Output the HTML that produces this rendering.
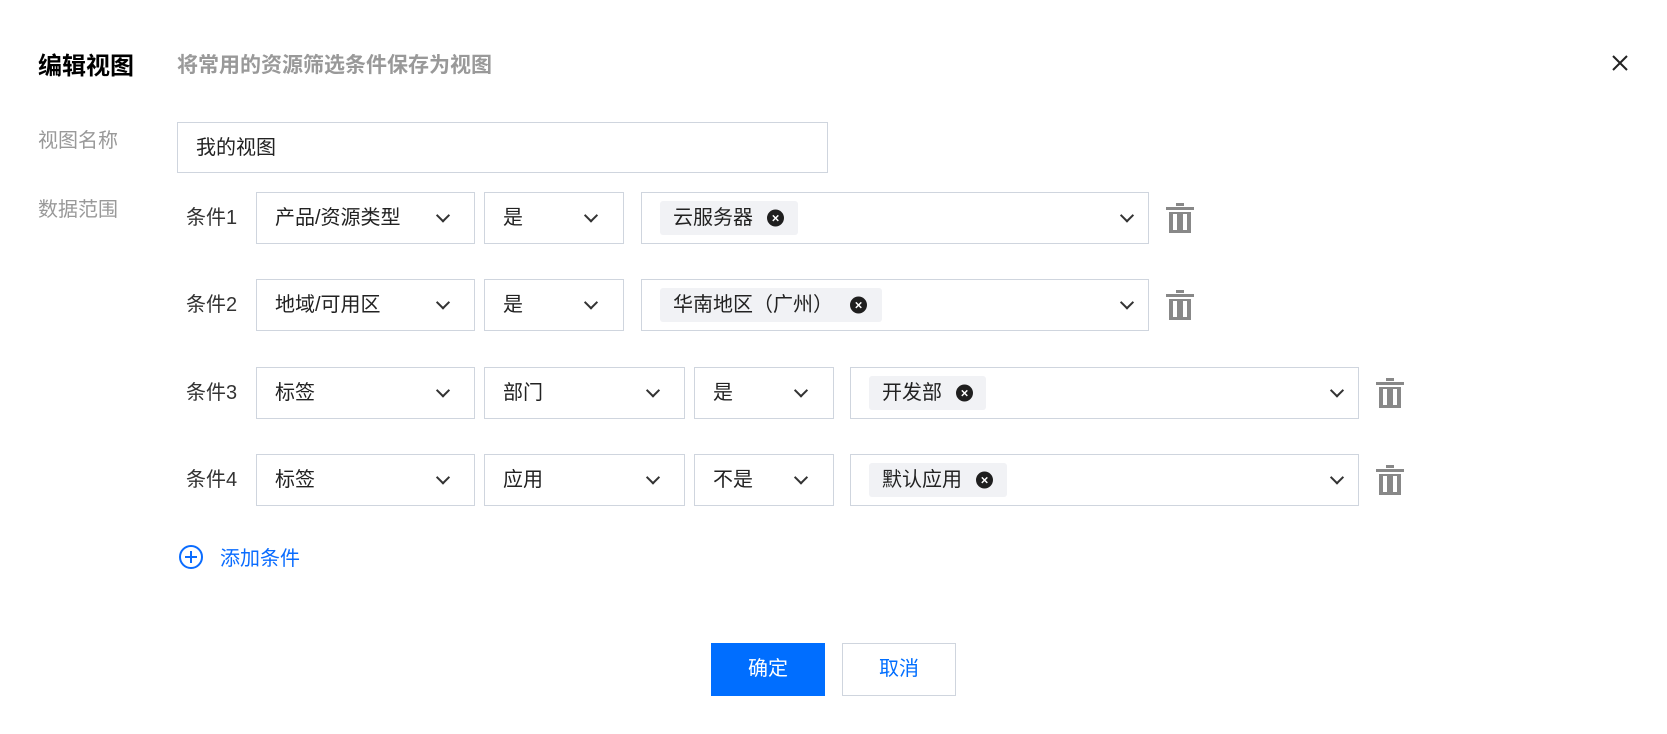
<!DOCTYPE html>
<html><head><meta charset="utf-8"><style>
*{box-sizing:border-box;margin:0;padding:0}
body{width:1667px;height:734px;background:#fff;position:relative;overflow:hidden;font-family:"Liberation Sans","Noto Sans CJK SC",sans-serif;color:#222;font-size:20px}
.a{position:absolute}
.box{position:absolute;border:1px solid #cfd5de;background:#fff;height:52px}
.t{position:absolute;top:50%;transform:translateY(-50%);white-space:nowrap;line-height:1}
.chev{position:absolute;top:50%;width:10px;height:10px;border-right:2px solid #333;border-bottom:2px solid #333;transform:translateY(-75%) rotate(45deg)}
.tag{position:absolute;top:8px;height:34px;background:#f1f2f5;border-radius:3px}
.x{position:absolute;top:50%;transform:translateY(-50%);width:17px;height:17px;border-radius:50%;background:#1f1f1f;color:#fff;font-size:13px;line-height:17px;text-align:center;font-weight:bold}
.lbl{position:absolute;left:186px;font-size:20px;color:#333}
</style></head><body>
<div class="a" style="left:38px;top:46px;font-size:24px;font-weight:bold;color:#000">编辑视图</div>
<div class="a" style="left:177px;top:49px;font-size:21px;font-weight:bold;color:#999">将常用的资源筛选条件保存为视图</div>
<svg class="a" style="left:1610px;top:53px" width="20" height="20" viewBox="0 0 20 20"><path d="M3 3L17 17M17 3L3 17" stroke="#222" stroke-width="2"/></svg>

<div class="a" style="left:38px;top:124px;color:#999">视图名称</div>
<div class="box" style="left:177px;top:122px;width:651px;height:51px"><span class="t" style="left:18px">我的视图</span></div>
<div class="a" style="left:38px;top:193px;color:#999">数据范围</div>

<!-- row1 -->
<div class="a" style="top:192px;left:0;width:1667px;height:52px">
<span class="t lbl" style="left:186px">条件1</span>
<div class="box" style="left:256px;width:219px"><span class="t" style="left:18px">产品/资源类型</span><span class="chev" style="left:181px"></span></div>
<div class="box" style="left:484px;width:140px"><span class="t" style="left:18px">是</span><span class="chev" style="left:101px"></span></div>
<div class="box" style="left:641px;width:508px"><div class="tag" style="left:18px;width:138px"><span class="t" style="left:13px">云服务器</span><span class="x" style="left:107px">×</span></div><span class="chev" style="left:480px"></span></div>
</div>
<!-- row2 -->
<div class="a" style="top:279px;left:0;width:1667px;height:52px">
<span class="t lbl" style="left:186px">条件2</span>
<div class="box" style="left:256px;width:219px"><span class="t" style="left:18px">地域/可用区</span><span class="chev" style="left:181px"></span></div>
<div class="box" style="left:484px;width:140px"><span class="t" style="left:18px">是</span><span class="chev" style="left:101px"></span></div>
<div class="box" style="left:641px;width:508px"><div class="tag" style="left:18px;width:222px"><span class="t" style="left:13px">华南地区（广州）</span><span class="x" style="left:190px">×</span></div><span class="chev" style="left:480px"></span></div>
</div>
<!-- row3 -->
<div class="a" style="top:367px;left:0;width:1667px;height:52px">
<span class="t lbl" style="left:186px">条件3</span>
<div class="box" style="left:256px;width:219px"><span class="t" style="left:18px">标签</span><span class="chev" style="left:181px"></span></div>
<div class="box" style="left:484px;width:201px"><span class="t" style="left:18px">部门</span><span class="chev" style="left:163px"></span></div>
<div class="box" style="left:694px;width:140px"><span class="t" style="left:18px">是</span><span class="chev" style="left:101px"></span></div>
<div class="box" style="left:850px;width:509px"><div class="tag" style="left:18px;width:117px"><span class="t" style="left:13px">开发部</span><span class="x" style="left:87px">×</span></div><span class="chev" style="left:481px"></span></div>
</div>
<!-- row4 -->
<div class="a" style="top:454px;left:0;width:1667px;height:52px">
<span class="t lbl" style="left:186px">条件4</span>
<div class="box" style="left:256px;width:219px"><span class="t" style="left:18px">标签</span><span class="chev" style="left:181px"></span></div>
<div class="box" style="left:484px;width:201px"><span class="t" style="left:18px">应用</span><span class="chev" style="left:163px"></span></div>
<div class="box" style="left:694px;width:140px"><span class="t" style="left:18px">不是</span><span class="chev" style="left:101px"></span></div>
<div class="box" style="left:850px;width:509px"><div class="tag" style="left:18px;width:138px"><span class="t" style="left:13px">默认应用</span><span class="x" style="left:107px">×</span></div><span class="chev" style="left:481px"></span></div>
</div>

<!-- trash icons -->
<svg class="a" style="left:1166px;top:203px" width="28" height="30" viewBox="0 0 28 30"><rect x="10" y="0" width="8" height="3" fill="#888"/><rect x="0" y="4" width="28" height="3" fill="#888"/><rect x="3" y="9" width="22" height="21" fill="#888"/><rect x="7" y="11" width="4" height="16" fill="#fff"/><rect x="17" y="11" width="4" height="16" fill="#fff"/></svg>
<svg class="a" style="left:1166px;top:290px" width="28" height="30" viewBox="0 0 28 30"><rect x="10" y="0" width="8" height="3" fill="#888"/><rect x="0" y="4" width="28" height="3" fill="#888"/><rect x="3" y="9" width="22" height="21" fill="#888"/><rect x="7" y="11" width="4" height="16" fill="#fff"/><rect x="17" y="11" width="4" height="16" fill="#fff"/></svg>
<svg class="a" style="left:1376px;top:378px" width="28" height="30" viewBox="0 0 28 30"><rect x="10" y="0" width="8" height="3" fill="#888"/><rect x="0" y="4" width="28" height="3" fill="#888"/><rect x="3" y="9" width="22" height="21" fill="#888"/><rect x="7" y="11" width="4" height="16" fill="#fff"/><rect x="17" y="11" width="4" height="16" fill="#fff"/></svg>
<svg class="a" style="left:1376px;top:465px" width="28" height="30" viewBox="0 0 28 30"><rect x="10" y="0" width="8" height="3" fill="#888"/><rect x="0" y="4" width="28" height="3" fill="#888"/><rect x="3" y="9" width="22" height="21" fill="#888"/><rect x="7" y="11" width="4" height="16" fill="#fff"/><rect x="17" y="11" width="4" height="16" fill="#fff"/></svg>

<svg class="a" style="left:178px;top:544px" width="26" height="26" viewBox="0 0 26 26"><circle cx="13" cy="13" r="11" fill="none" stroke="#0a6cff" stroke-width="2"/><path d="M13 7v12M7 13h12" stroke="#0a6cff" stroke-width="2"/></svg>
<div class="a" style="left:220px;top:542px;color:#0a6cff">添加条件</div>

<div class="a" style="left:711px;top:643px;width:114px;height:53px;background:#006eff;color:#fff;text-align:center;line-height:53px">确定</div>
<div class="a" style="left:842px;top:643px;width:114px;height:53px;border:1px solid #cfd5de;color:#006eff;text-align:center;line-height:51px">取消</div>
</body></html>
